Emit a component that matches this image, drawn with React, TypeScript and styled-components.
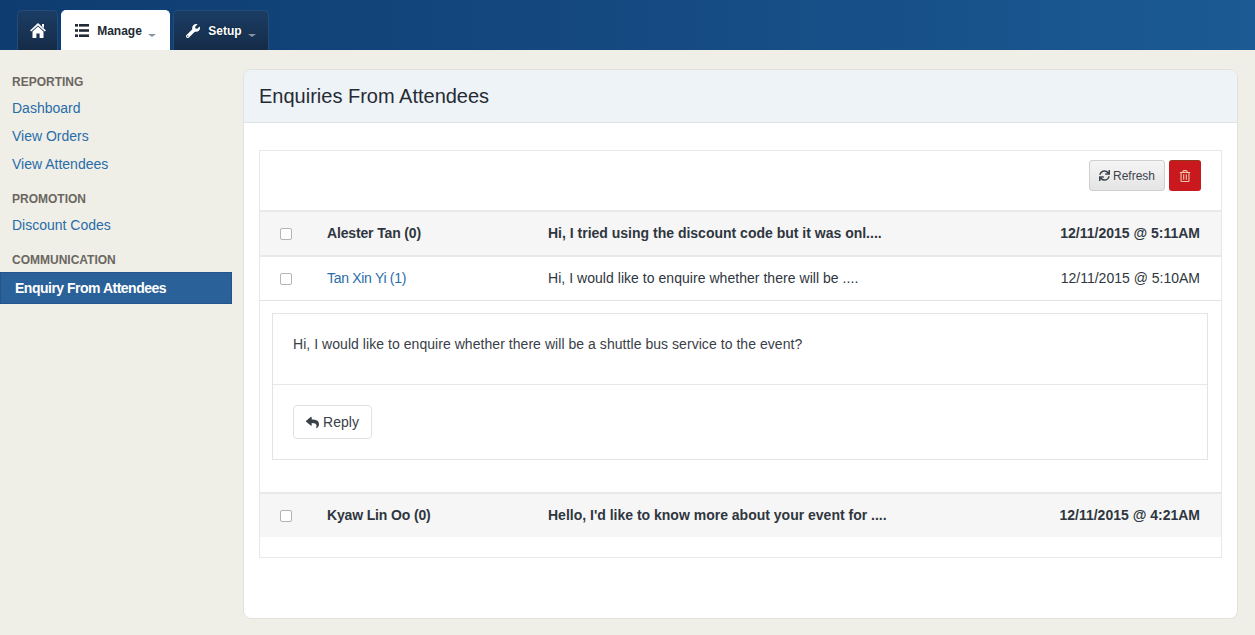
import styled, { createGlobalStyle } from 'styled-components';
import { FaWrench, FaSync, FaRegTrashAlt, FaReply } from 'react-icons/fa';

const GlobalStyle = createGlobalStyle`
    html, body {
        margin: 0;
        padding: 0;
        height: 100%;
        background: #efefe8;
        font-family: 'Liberation Sans', Arial, sans-serif;
        font-size: 14px;
        color: #2f3640;
    }
`;

const Page = styled.div`
    width: 1255px;
    height: 635px;
    overflow: hidden;
    display: flex;
    flex-direction: column;
`;

const TopBar = styled.div`
    height: 50px;
    flex: none;
    box-sizing: border-box;
    padding: 10px 0 0 17px;
    display: flex;
    align-items: stretch;
    gap: 3px;
    background: linear-gradient(to right, #0e3c70 0%, #14487f 45%, #1b5a94 100%);
`;

const Tab = styled.div<{ $active?: boolean; $width: number }>`
    width: ${(p) => p.$width}px;
    box-sizing: border-box;
    display: flex;
    align-items: center;
    justify-content: center;
    gap: 8px;
    border: 1px solid ${(p) => (p.$active ? '#ffffff' : '#254c78')};
    border-bottom: none;
    border-radius: 5px 5px 0 0;
    font-size: 12px;
    font-weight: bold;
    color: ${(p) => (p.$active ? '#222a35' : '#ffffff')};
    background: ${(p) => (p.$active ? '#ffffff' : 'linear-gradient(to bottom, #1b3d64, #152b47)')};
    text-shadow: ${(p) => (p.$active ? 'none' : '0 0 2px #0a1a2c')};
`;

const Caret = styled.span`
    width: 0;
    height: 0;
    margin: 10px 0 0 -2px;
    border-left: 4px solid transparent;
    border-right: 4px solid transparent;
    border-top: 3px solid #8793a3;
`;

const Body = styled.div`
    flex: 1;
    display: flex;
    min-height: 0;
`;

const Sidebar = styled.nav`
    width: 243px;
    flex: none;
    padding-top: 25px;
    box-sizing: border-box;
`;

const SectionTitle = styled.div`
    height: 14px;
    line-height: 14px;
    margin: 0 0 5px 12px;
    font-size: 12px;
    font-weight: bold;
    color: #6b6660;
`;

const NavLink = styled.a`
    display: block;
    height: 28px;
    line-height: 28px;
    padding-left: 12px;
    font-size: 14px;
    color: #2a6ca8;
`;

const NavGroup = styled.div`
    margin-bottom: 14px;
`;

const ActiveLink = styled.a`
    display: block;
    width: 232px;
    height: 32px;
    line-height: 30px;
    box-sizing: border-box;
    padding-left: 14px;
    margin-top: 1px;
    font-size: 14px;
    font-weight: bold;
    letter-spacing: -0.5px;
    color: #ffffff;
    background: #2a6198;
    border: 1px solid #23558a;
`;

const Card = styled.main`
    width: 995px;
    height: 550px;
    margin-top: 19px;
    box-sizing: border-box;
    background: #ffffff;
    border: 1px solid #e2e2dc;
    border-radius: 8px;
    overflow: hidden;
`;

const CardHeader = styled.div`
    height: 53px;
    box-sizing: border-box;
    padding-left: 15px;
    display: flex;
    align-items: center;
    background: #eef3f8;
    border-bottom: 1px solid #dfe3e7;
    font-size: 20px;
    color: #262b33;
`;

const Inbox = styled.div`
    width: 963px;
    height: 408px;
    margin: 27px 0 0 15px;
    box-sizing: border-box;
    border: 1px solid #e8e8e8;
`;

const Toolbar = styled.div`
    height: 59px;
    box-sizing: border-box;
    padding: 9px 20px 0 0;
    display: flex;
    justify-content: flex-end;
    gap: 4px;
`;

const RefreshButton = styled.button`
    width: 76px;
    height: 31px;
    padding: 0;
    display: flex;
    align-items: center;
    justify-content: center;
    gap: 3px;
    font-family: inherit;
    font-size: 12px;
    color: #3d434b;
    background: linear-gradient(to bottom, #f5f5f5, #e4e4e4);
    border: 1px solid #cfcfcf;
    border-radius: 3px;
`;

const DeleteButton = styled.button`
    width: 32px;
    height: 31px;
    padding: 0;
    display: flex;
    align-items: center;
    justify-content: center;
    color: #e6c8a8;
    background: #c9181e;
    border: none;
    border-top: 1px solid #8f3a1c;
    border-radius: 3px;
`;

const Row = styled.div<{ $unread?: boolean }>`
    height: 45px;
    box-sizing: border-box;
    display: grid;
    grid-template-columns: 67px 221px 1fr auto;
    align-items: center;
    padding: 0 21px 2px 0;
    border-top: 2px solid #e9e9e9;
    font-size: 14px;
    font-weight: ${(p) => (p.$unread ? 'bold' : 'normal')};
    color: #2f3640;
    background: ${(p) => (p.$unread ? '#f6f6f6' : '#ffffff')};
`;

const Check = styled.span`
    display: block;
    width: 10px;
    height: 10px;
    margin: 2px 0 0 20px;
    background: #ffffff;
    border: 1px solid #b4b4b4;
    border-radius: 2px;
`;

const Sender = styled.span`
    letter-spacing: -0.15px;
`;

const SenderLink = styled.a`
    letter-spacing: -0.3px;
    color: #2a6ca8;
`;

const Preview = styled.span<{ $read?: boolean }>`
    letter-spacing: ${(p) => (p.$read ? '0.04px' : '0')};
`;

const Detail = styled.div`
    height: 192px;
    box-sizing: border-box;
    padding: 12px 13px 0 12px;
    border-top: 1px solid #e2e2e2;
`;

const DetailBox = styled.div`
    height: 147px;
    box-sizing: border-box;
    border: 1px solid #e4e4e4;
`;

const Message = styled.div`
    height: 71px;
    box-sizing: border-box;
    padding: 22px 0 0 20px;
    line-height: 16px;
    font-size: 14px;
    letter-spacing: 0.05px;
    color: #3a4048;
    border-bottom: 1px solid #e8e8e8;
`;

const ReplyArea = styled.div`
    padding: 20px;
`;

const ReplyButton = styled.button`
    width: 79px;
    height: 34px;
    padding: 0;
    display: flex;
    align-items: center;
    justify-content: center;
    gap: 4px;
    font-family: inherit;
    font-size: 14px;
    color: #3a4048;
    background: #ffffff;
    border: 1px solid #e2e2e2;
    border-radius: 4px;
`;

const HomeIcon = () => (
    <svg width="16" height="15" viewBox="0 0 16 15" fill="currentColor">
        <path d="M8 0 L16 7.5 L14.8 8.6 L8 2.4 L1.2 8.6 L0 7.5 Z" />
        <path d="M12 1 H14 V5 L12 3.2 Z" />
        <path d="M8 3.6 L13.5 8.6 V15 H9.6 V10.4 H6.4 V15 H2.5 V8.6 Z" />
    </svg>
);

const ListIcon = () => (
    <svg width="14" height="13" viewBox="0 0 14 13" fill="currentColor">
        <rect x="0" y="0" width="3" height="2.6" />
        <rect x="0" y="5.2" width="3" height="2.6" />
        <rect x="0" y="10.4" width="3" height="2.6" />
        <rect x="4" y="0" width="10" height="2.6" />
        <rect x="4" y="5.2" width="10" height="2.6" />
        <rect x="4" y="10.4" width="10" height="2.6" />
    </svg>
);

export default function App() {
    return (
        <Page>
            <GlobalStyle />
            <TopBar>
                <Tab $width={41}><HomeIcon /></Tab>
                <Tab $active $width={109}>
                    <ListIcon /> Manage <Caret />
                </Tab>
                <Tab $width={96}>
                    <FaWrench size={14} /> Setup <Caret />
                </Tab>
            </TopBar>
            <Body>
                <Sidebar>
                    <SectionTitle>REPORTING</SectionTitle>
                    <NavGroup>
                        <NavLink>Dashboard</NavLink>
                        <NavLink>View Orders</NavLink>
                        <NavLink>View Attendees</NavLink>
                    </NavGroup>
                    <SectionTitle>PROMOTION</SectionTitle>
                    <NavGroup>
                        <NavLink>Discount Codes</NavLink>
                    </NavGroup>
                    <SectionTitle>COMMUNICATION</SectionTitle>
                    <ActiveLink>Enquiry From Attendees</ActiveLink>
                </Sidebar>
                <Card>
                    <CardHeader>Enquiries From Attendees</CardHeader>
                    <Inbox>
                        <Toolbar>
                            <RefreshButton><FaSync size={11} /> Refresh</RefreshButton>
                            <DeleteButton><FaRegTrashAlt size={12} /></DeleteButton>
                        </Toolbar>
                        <Row $unread>
                            <Check />
                            <Sender>Alester Tan (0)</Sender>
                            <Preview>Hi, I tried using the discount code but it was onl....</Preview>
                            <span>12/11/2015 @ 5:11AM</span>
                        </Row>
                        <Row>
                            <Check />
                            <SenderLink>Tan Xin Yi (1)</SenderLink>
                            <Preview $read>Hi, I would like to enquire whether there will be ....</Preview>
                            <span>12/11/2015 @ 5:10AM</span>
                        </Row>
                        <Detail>
                            <DetailBox>
                                <Message>Hi, I would like to enquire whether there will be a shuttle bus service to the event?</Message>
                                <ReplyArea>
                                    <ReplyButton><FaReply size={13} /> Reply</ReplyButton>
                                </ReplyArea>
                            </DetailBox>
                        </Detail>
                        <Row $unread>
                            <Check />
                            <Sender>Kyaw Lin Oo (0)</Sender>
                            <Preview>Hello, I'd like to know more about your event for ....</Preview>
                            <span>12/11/2015 @ 4:21AM</span>
                        </Row>
                    </Inbox>
                </Card>
            </Body>
        </Page>
    );
}
